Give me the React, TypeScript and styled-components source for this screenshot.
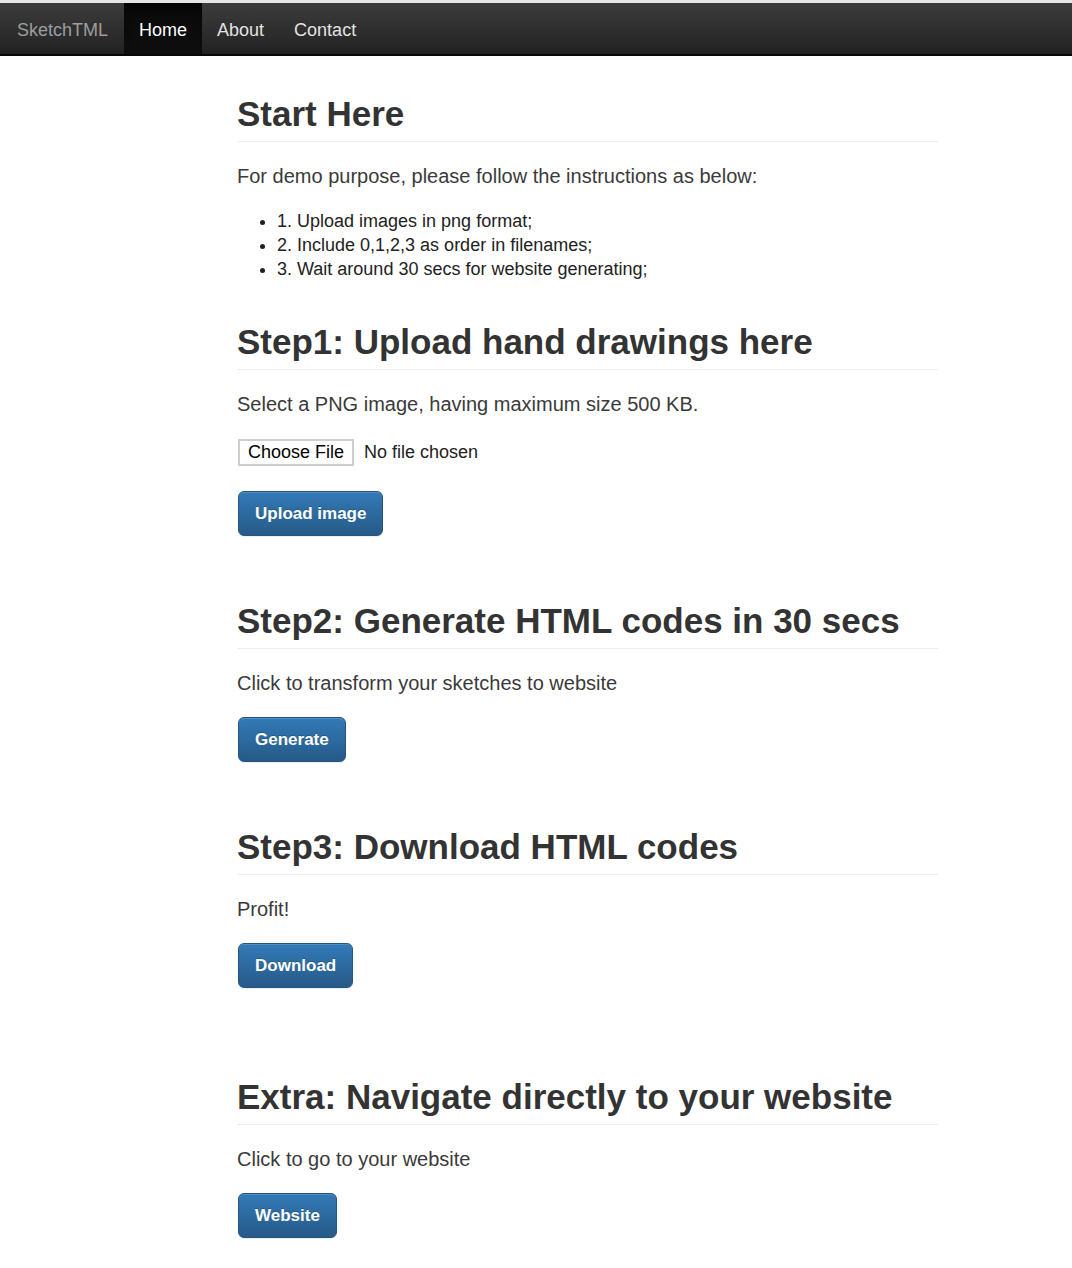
import React from "react";
import styled, { createGlobalStyle } from "styled-components";

const GlobalStyle = createGlobalStyle`
  html, body { margin: 0; padding: 0; background: #fff; }
  body {
    font-family: "Liberation Sans", Arial, sans-serif;
    color: #333;
    font-size: 18px;
  }
  * { box-sizing: border-box; }
`;

const TopStrip = styled.div`
  height: 3px;
  background: #e6e6e6;
`;

const Navbar = styled.nav`
  display: flex;
  align-items: stretch;
  height: 53px;
  background: linear-gradient(to bottom, #3c3c3c 0%, #222 100%);
  border-bottom: 2px solid #080808;
`;

const Brand = styled.a`
  display: flex;
  align-items: center;
  padding: 3px 16px 0 17px;
  font-size: 18px;
  color: #9d9d9d;
  text-decoration: none;
`;

const NavLink = styled.a<{ $active?: boolean }>`
  display: flex;
  align-items: center;
  padding: 3px 15px 0;
  font-size: 18px;
  text-decoration: none;
  color: ${(p) => (p.$active ? "#fff" : "#e4e4e4")};
  background: ${(p) => (p.$active ? "linear-gradient(to bottom, #080808 0%, #0f0f0f 100%)" : "transparent")};
  box-shadow: ${(p) => (p.$active ? "inset 0 3px 9px rgba(0,0,0,.25)" : "none")};
  text-shadow: 0 -1px 0 rgba(0,0,0,.25);
`;

const Main = styled.main`
  padding: 38px 0 40px 237px;
`;

const Content = styled.div`
  width: 701px;
`;

const Section = styled.section<{ $gap: number }>`
  margin-top: ${(p) => p.$gap}px;
`;

const Heading = styled.h1`
  margin: 0;
  font-size: 35px;
  line-height: 40px;
  font-weight: 700;
  color: #333;
  padding-bottom: 7px;
  border-bottom: 1px solid #eee;
`;

const Lead = styled.p`
  margin: 19px 0 0;
  font-family: "Liberation Sans", Arial, sans-serif;
  font-size: 20px;
  line-height: 30px;
  font-weight: 300;
  color: #3a3a3a;
`;

const Steps = styled.ul`
  margin: 18px 0 0;
  padding-left: 40px;
  list-style: disc;
  font-size: 18px;
  line-height: 24px;
  color: #222;
`;

const FileRow = styled.label`
  display: flex;
  align-items: center;
  margin-top: 20px;
  height: 27px;
  font-size: 18px;
  color: #222;
  cursor: pointer;
  input { display: none; }
`;

const FileButton = styled.span`
  display: flex;
  align-items: center;
  height: 27px;
  padding: 0 8px;
  background: #fff;
  border: 2px solid #cfcfcf;
  color: #000;
  margin-left: 1px;
`;

const FileStatus = styled.span`
  margin-left: 10px;
`;

const Button = styled.button<{ $top: number }>`
  display: flex;
  align-items: center;
  height: 45px;
  margin-top: ${(p) => p.$top}px;
  margin-left: 1px;
  padding: 0 16px;
  font-family: "Liberation Sans", Arial, sans-serif;
  font-size: 17px;
  font-weight: 700;
  color: #fff;
  text-shadow: 0 -1px 0 rgba(0,0,0,.2);
  background: linear-gradient(to bottom, #337ab7 0%, #265a88 100%);
  border: 1px solid #245580;
  border-radius: 6px;
  box-shadow: inset 0 1px 0 rgba(255,255,255,.15), 0 1px 1px rgba(0,0,0,.075);
  cursor: pointer;
`;

export default function App() {
  return (
    <>
      <GlobalStyle />
      <TopStrip />
      <Navbar>
        <Brand href="#">SketchTML</Brand>
        <NavLink href="#" $active>Home</NavLink>
        <NavLink href="#">About</NavLink>
        <NavLink href="#">Contact</NavLink>
      </Navbar>
      <Main>
        <Content>
          <Section $gap={0}>
            <Heading>Start Here</Heading>
            <Lead>For demo purpose, please follow the instructions as below:</Lead>
            <Steps>
              <li>1. Upload images in png format;</li>
              <li>2. Include 0,1,2,3 as order in filenames;</li>
              <li>3. Wait around 30 secs for website generating;</li>
            </Steps>
          </Section>
          <Section $gap={41}>
            <Heading>Step1: Upload hand drawings here</Heading>
            <Lead>Select a PNG image, having maximum size 500 KB.</Lead>
            <FileRow>
              <input type="file" accept="image/png" />
              <FileButton>Choose File</FileButton>
              <FileStatus>No file chosen</FileStatus>
            </FileRow>
            <Button $top={25}>Upload image</Button>
          </Section>
          <Section $gap={65}>
            <Heading>Step2: Generate HTML codes in 30 secs</Heading>
            <Lead>Click to transform your sketches to website</Lead>
            <Button $top={19}>Generate</Button>
          </Section>
          <Section $gap={65}>
            <Heading>Step3: Download HTML codes</Heading>
            <Lead>Profit!</Lead>
            <Button $top={19}>Download</Button>
          </Section>
          <Section $gap={89}>
            <Heading>Extra: Navigate directly to your website</Heading>
            <Lead>Click to go to your website</Lead>
            <Button $top={19}>Website</Button>
          </Section>
        </Content>
      </Main>
    </>
  );
}
